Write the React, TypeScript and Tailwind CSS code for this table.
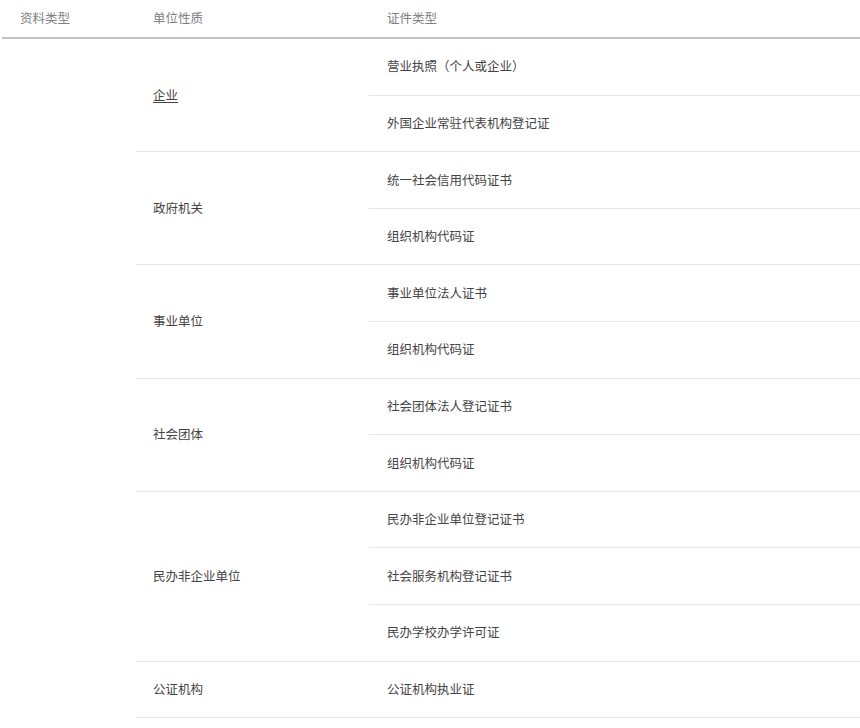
const groups: { name: string; underline?: boolean; docs: string[] }[] = [
  { name: "企业", underline: true, docs: ["营业执照（个人或企业）", "外国企业常驻代表机构登记证"] },
  { name: "政府机关", docs: ["统一社会信用代码证书", "组织机构代码证"] },
  { name: "事业单位", docs: ["事业单位法人证书", "组织机构代码证"] },
  { name: "社会团体", docs: ["社会团体法人登记证书", "组织机构代码证"] },
  { name: "民办非企业单位", docs: ["民办非企业单位登记证书", "社会服务机构登记证书", "民办学校办学许可证"] },
  { name: "公证机构", docs: ["公证机构执业证"] },
];

export default function App() {
  return (
    <div
      className="min-h-screen bg-white text-[12.5px] text-[#444]"
      style={{ fontFamily: '"Noto Sans CJK SC", "Noto Sans", sans-serif' }}
    >
      {/* 表头 */}
      <div className="ml-[2px] flex h-[39px] items-center border-b-2 border-[#c4c4c4] text-[#808080]">
        <div className="w-[134px] pl-[18px]">资料类型</div>
        <div className="w-[233px] pl-[17px]">单位性质</div>
        <div className="flex-1 pl-[18px]">证件类型</div>
      </div>

      <div className="ml-[2px] flex">
        <div className="w-[134px] shrink-0" />
        <div className="flex-1">
          {groups.map((g) => (
            <div key={g.name} className="flex border-b border-[#e6e6e6]">
              <div className="flex w-[233px] shrink-0 items-center pl-[17px]">
                <span className={g.underline ? "underline underline-offset-2" : ""}>{g.name}</span>
              </div>
              <div className="flex-1">
                {g.docs.map((d, i) =>
                  i < g.docs.length - 1 ? (
                    <div
                      key={d + i}
                      className="flex h-[56.6px] items-center border-b border-[#e6e6e6] pl-[18px]"
                    >
                      {d}
                    </div>
                  ) : (
                    <div key={d + i} className="flex h-[55.6px] items-center pl-[18px]">
                      {d}
                    </div>
                  )
                )}
              </div>
            </div>
          ))}
        </div>
      </div>
    </div>
  );
}
